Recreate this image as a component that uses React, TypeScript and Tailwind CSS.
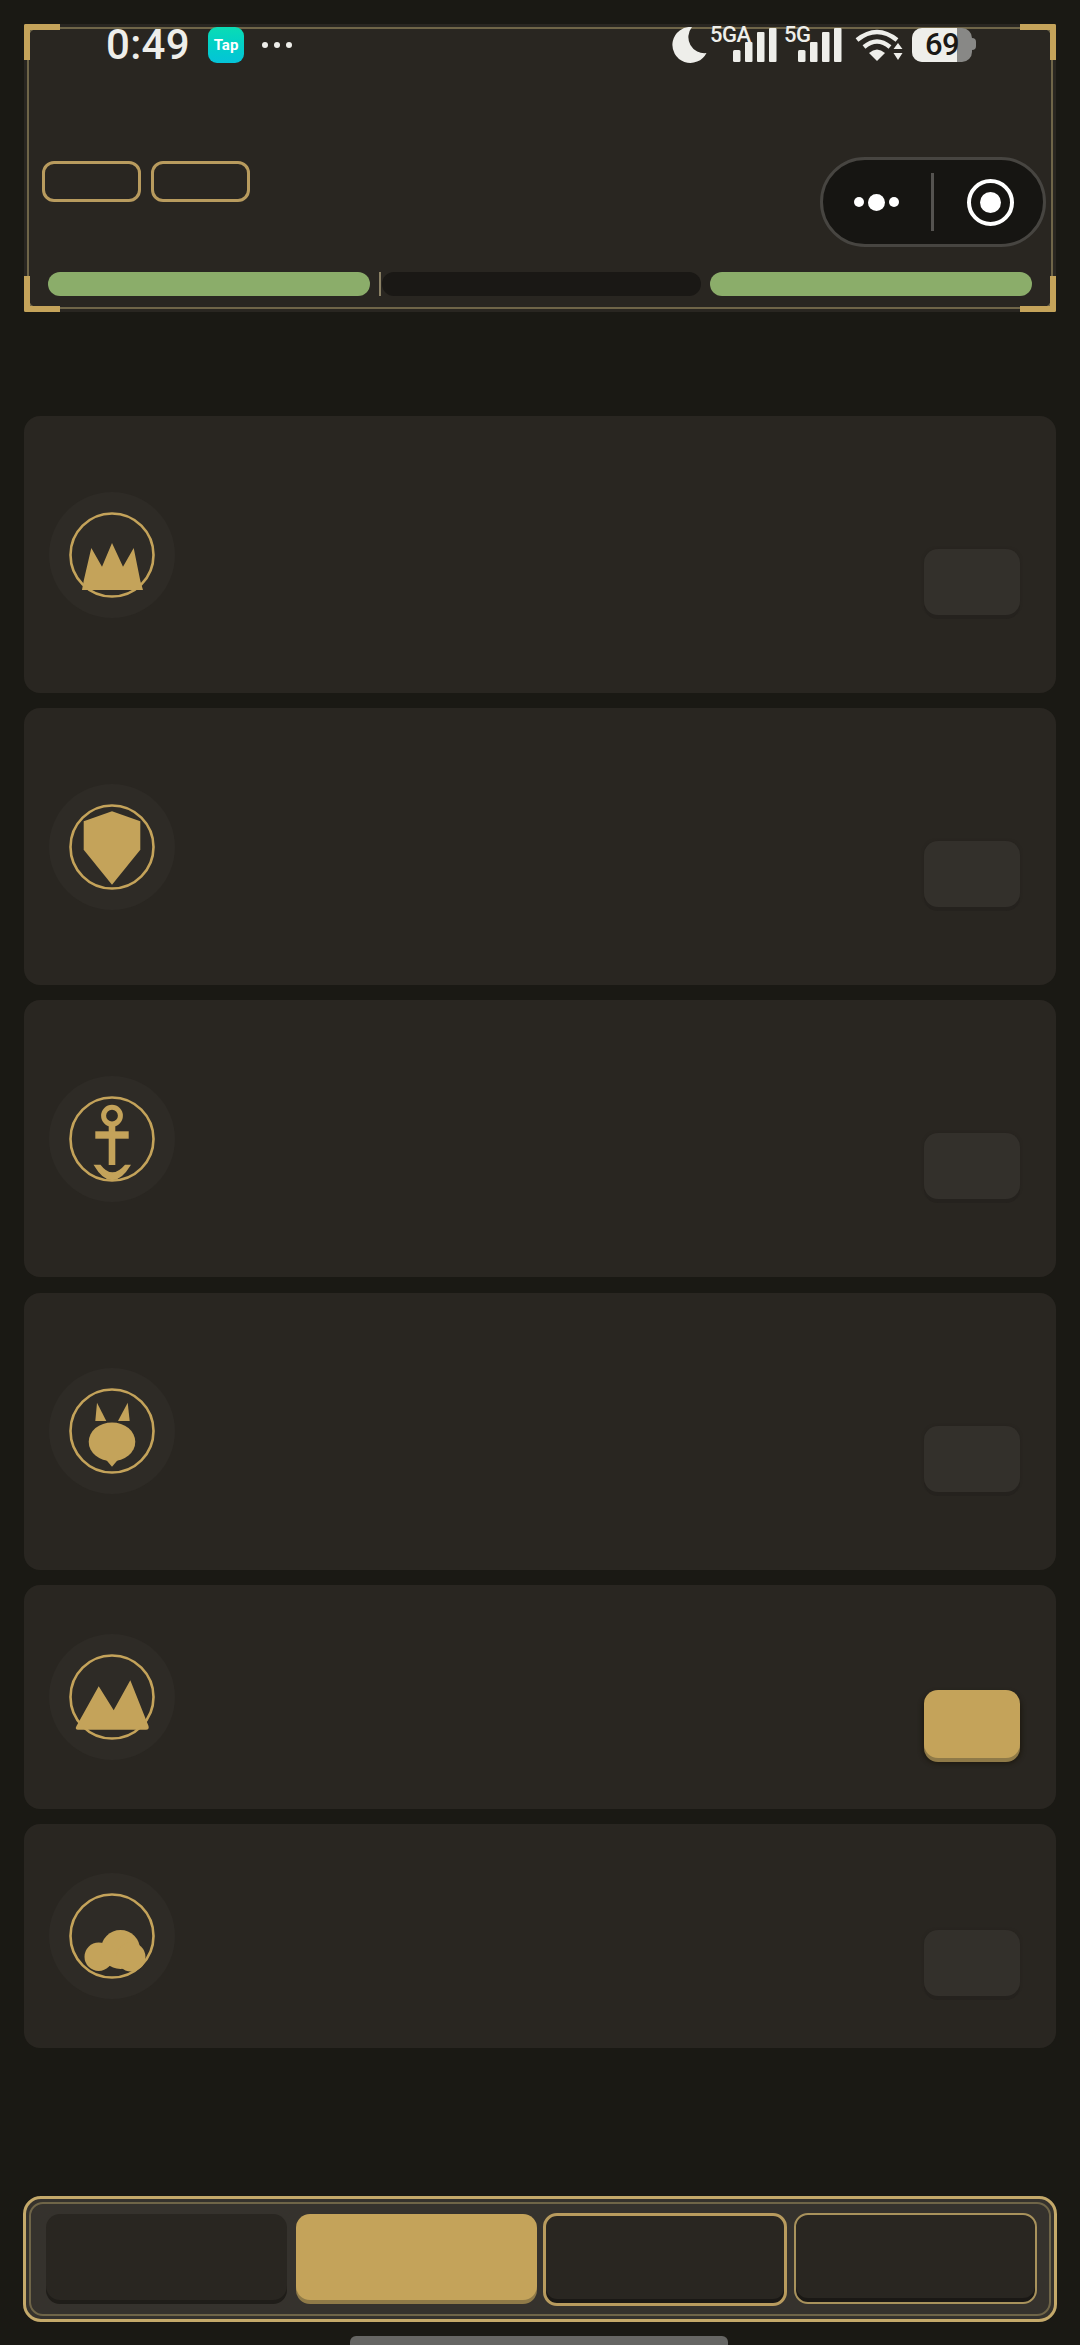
import React from "react";

const GOLD = "#c4a35a";

function Emblem({ children }: { children: React.ReactNode }) {
  return (
    <div className="w-[126px] h-[126px] rounded-full bg-[#2e2b26] flex items-center justify-center shrink-0">
      <svg width="126" height="126" viewBox="-63 -63 126 126">
        <circle cx="0" cy="0" r="41.5" fill="none" stroke={GOLD} strokeWidth="2.6" />
        {children}
      </svg>
    </div>
  );
}

const Crown = () => (
  <Emblem>
    <polygon fill={GOLD} points="-30,35 31,35 28.3,25.7 21.7,-7 11,11.7 0,-12 -10,11.7 -20.7,-7 -28.3,25.7" />
  </Emblem>
);
const Shield = () => (
  <Emblem>
    <polygon fill={GOLD} points="0,-35.7 28.3,-25.7 28.3,2.7 0,37.7 -28.3,2.7 -28.3,-25.7" />
  </Emblem>
);
const Anchor = () => (
  <Emblem>
    <circle cx="0" cy="-23.3" r="8.4" fill="none" stroke={GOLD} strokeWidth="5" />
    <rect x="-3.3" y="-15" width="6.6" height="41" fill={GOLD} />
    <rect x="-16.7" y="-7.7" width="33.4" height="7.4" fill={GOLD} />
    <path fill={GOLD} d="M-18.5 25.7 L-11.5 25.7 Q0 41 13 25.7 L19 25.7 Q0 57 -18.5 25.7 Z" />
  </Emblem>
);
const Fox = () => (
  <Emblem>
    <polygon fill={GOLD} points="-15,-28.3 -16.7,-10 -5.7,-10" />
    <polygon fill={GOLD} points="15.7,-28.3 17.7,-10 6,-10" />
    <ellipse cx="0" cy="10.8" rx="23.3" ry="19.4" fill={GOLD} />
    <polygon fill={GOLD} points="-7,27.5 0,35.7 7,27.5" />
  </Emblem>
);
const Peaks = () => (
  <Emblem>
    <path fill={GOLD} d="M-35.5 29 L-13.3 -10.7 L1.7 13.3 L18.3 -16.7 L36.5 29 Q37.5 32.7 34 32.7 L-34 32.7 Q-37.5 32.7 -35.5 29 Z" />
  </Emblem>
);
const Cloud = () => (
  <Emblem>
    <circle cx="-13.3" cy="20.7" r="14.2" fill={GOLD} />
    <circle cx="8.5" cy="13.5" r="19.5" fill={GOLD} />
    <circle cx="19" cy="21" r="14.5" fill={GOLD} />
    <path fill={GOLD} d="M-12 20 L18 20 L18 33.5 Q8 30 1 28 Q-4 30 -10 34 Z" />
  </Emblem>
);

function Row({ tall, active, icon }: { tall: boolean; active?: boolean; icon: React.ReactNode }) {
  return (
    <div
      className={
        "rounded-[16px] bg-[#292621] pl-[25px] pr-[36px] flex items-center relative " +
        (tall ? "h-[277px]" : "h-[224px]")
      }
    >
      {icon}
      <div className="flex-1 self-stretch flex items-end justify-end">
        {active ? (
          <div className="mb-[51px] w-[96px] h-[68px] rounded-[14px] bg-[#c4a35a] shadow-[0_4px_0_#8f7a48,0_4px_4px_2px_#1f1b12]" />
        ) : (
          <div
            className={
              "w-[96px] h-[66px] rounded-[14px] bg-[#33302b] shadow-[0_4px_0_#25221e,0_0_3px_#25221e] " +
              (tall ? "mb-[78px]" : "mb-[52px]")
            }
          />
        )}
      </div>
    </div>
  );
}

function Corner({ className }: { className: string }) {
  return <div className={"absolute w-[36px] h-[36px] border-[#c4a35a] " + className} />;
}

function Signal({ label, labelClass }: { label: string; labelClass: string }) {
  return (
    <div className="relative w-[44px] h-[36px]">
      <svg width="44" height="36" viewBox="0 0 44 36" className="absolute left-0 top-0">
        <rect x="0" y="23" width="7.5" height="12" rx="1.5" fill="#eeeeea" />
        <rect x="12" y="15" width="7.5" height="20" rx="1" fill="#eeeeea" />
        <rect x="24" y="5" width="7.5" height="30" rx="1" fill="#eeeeea" />
        <rect x="36" y="1" width="7.5" height="34" rx="1" fill="#eeeeea" />
      </svg>
      <span className={"absolute text-[22px] leading-[22px] font-medium text-[#eeeeea] [font-family:Roboto,sans-serif] tracking-[-0.5px] " + labelClass}>
        {label}
      </span>
    </div>
  );
}

function StatusBar() {
  return (
    <div className="absolute left-0 top-0 w-full h-[70px] flex items-start pt-[27px] pl-[106px] [font-family:Roboto,sans-serif]">
      <span className="text-[42px] leading-[36px] font-medium text-[#eeeeea] w-[84px] tracking-[0.3px]">0:49</span>
      <div className="ml-[18px] w-[36px] h-[36px] rounded-[9px] bg-gradient-to-b from-[#0bdcb4] to-[#05c3d8] flex items-center justify-center">
        <span className="text-[15px] leading-[15px] font-bold text-white">Tap</span>
      </div>
      <div className="ml-[18px] mt-[15px] flex gap-[6px]">
        <div className="w-[6px] h-[6px] rounded-full bg-[#eeeeea]" />
        <div className="w-[6px] h-[6px] rounded-full bg-[#eeeeea]" />
        <div className="w-[6px] h-[6px] rounded-full bg-[#eeeeea]" />
      </div>
      <div className="absolute left-[671px] top-[27px] flex items-start">
        <svg width="36" height="36" viewBox="0 0 36 36">
          <path fill="#eeeeea" d="M21 0 A18 18 0 1 0 35.5 26 A16 16 0 0 1 21 0 Z" />
        </svg>
        <div className="ml-[26px]">
          <Signal label="5GA" labelClass="left-[-23px] top-[-3px]" />
        </div>
        <div className="ml-[21px]">
          <Signal label="5G" labelClass="left-[-14px] top-[-3px]" />
        </div>
        <svg width="48" height="36" viewBox="0 0 48 36" className="ml-[13px]">
          <path fill="none" stroke="#eeeeea" strokeWidth="4.4" d="M2 13 Q22 -3 42 13" />
          <path fill="none" stroke="#eeeeea" strokeWidth="4.4" d="M9 20 Q22 9 35 20" />
          <path fill="#eeeeea" d="M14 26 Q22 19 30 26 L22 34 Z" />
          <path fill="#eeeeea" d="M43 16 L47.5 22 L38.5 22 Z M38.5 26 L47.5 26 L43 33 Z" />
        </svg>
        <div className="relative ml-[9px] mt-[1px] w-[60px] h-[34px] rounded-[10px] bg-[#888886]">
          <div className="absolute left-0 top-0 h-full w-[45px] rounded-l-[10px] bg-[#eeeeea]" />
          <span className="absolute left-[13px] top-[1px] text-[31px] leading-[32px] font-medium text-[#1a1815] tracking-[-0.5px]">69</span>
        </div>
        <div className="mt-[11px] w-[4px] h-[12px] rounded-r-[4px] bg-[#888886]" />
      </div>
    </div>
  );
}

function Header() {
  return (
    <div className="relative h-[288px] bg-[#292621] flex flex-col justify-end pl-[24px] pr-[24px] pb-[16px]">
      <div className="absolute inset-[3px] border-2 border-[#6f6548] rounded-[10px]" />
      <Corner className="left-0 top-0 border-l-[6px] border-t-[6px] rounded-tl-[2px]" />
      <Corner className="right-0 top-0 border-r-[6px] border-t-[6px] rounded-tr-[2px]" />
      <Corner className="left-0 bottom-0 border-l-[6px] border-b-[6px] rounded-bl-[2px]" />
      <Corner className="right-0 bottom-0 border-r-[6px] border-b-[6px] rounded-br-[2px]" />

      <div className="relative flex items-start justify-between mb-[25px] -ml-[6px] -mr-[13.5px]">
        <div className="flex gap-[10px] mt-[4px]">
          <div className="w-[99px] h-[41px] rounded-[12px] border-[3px] border-[#b89b5e]" />
          <div className="w-[99px] h-[41px] rounded-[12px] border-[3px] border-[#b89b5e]" />
        </div>
        <div className="w-[226px] h-[90px] rounded-full bg-[#161512] border-[3px] border-[#474541] flex items-center">
          <div className="w-[108px] flex items-center justify-center gap-[4px]">
            <div className="w-[10px] h-[10px] rounded-full bg-white" />
            <div className="w-[17px] h-[17px] rounded-full bg-white" />
            <div className="w-[10px] h-[10px] rounded-full bg-white" />
          </div>
          <div className="w-[3px] h-[58px] bg-[#555350]" />
          <div className="flex-1 flex items-center justify-center pl-[4px]">
            <div className="w-[47px] h-[47px] rounded-full border-[4px] border-white flex items-center justify-center">
              <div className="w-[21px] h-[21px] rounded-full bg-white" />
            </div>
          </div>
        </div>
      </div>

      <div className="relative flex gap-[9px]">
        <div className="flex-1 h-[24px] rounded-[12px] bg-[#8bad6a]" />
        <div className="flex-1 h-[24px] flex items-stretch gap-[1px]">
          <div className="w-[2px] bg-[#8a8064]" />
          <div className="flex-1 rounded-[12px] bg-[#1a1815]" />
        </div>
        <div className="flex-1 h-[24px] rounded-[12px] bg-[#8bad6a]" />
      </div>
    </div>
  );
}

function BottomNav() {
  return (
    <div className="mt-auto mb-[23px] -mx-[1px] h-[126px] rounded-[18px] border-[3px] border-[#c4a96a] bg-[#35322d] p-[3px]">
      <div className="h-full rounded-[14px] border-2 border-[#6f6548] pl-[15px] pt-[10px] flex items-start gap-[9px]">
        <div className="w-[241px] h-[86px] rounded-[14px] bg-[#292621] shadow-[0_4px_0_#1f1d19]" />
        <div className="w-[241px] h-[86px] rounded-[14px] bg-[#c4a35a] shadow-[0_4px_0_#8f7a48]" />
        <div className="w-[244px] h-[93px] -mt-[1px] -ml-[3px] rounded-[14px] border-[3px] border-[#b89b5e] bg-[#292621] shadow-[inset_0_-4px_0_#1a1815]" />
        <div className="w-[243px] h-[91px] -mt-[1px] -ml-[2px] rounded-[14px] border-2 border-[#a8925c] bg-[#292621] shadow-[inset_0_-4px_0_#1a1815]" />
      </div>
    </div>
  );
}

export default function App() {
  return (
    <div className="relative w-[1080px] h-[2345px] overflow-hidden bg-[#1a1914] flex flex-col px-[24px] pt-[24px]">
      <Header />
      <div className="mt-[104px] flex flex-col gap-[15.2px]">
        <Row tall icon={<Crown />} />
        <Row tall icon={<Shield />} />
        <Row tall icon={<Anchor />} />
        <Row tall icon={<Fox />} />
        <Row tall={false} active icon={<Peaks />} />
        <Row tall={false} icon={<Cloud />} />
      </div>
      <BottomNav />
      <StatusBar />
      <div className="absolute left-[350px] bottom-0 w-[378px] h-[9px] rounded-t-[6px] bg-[#666664]" />
    </div>
  );
}
